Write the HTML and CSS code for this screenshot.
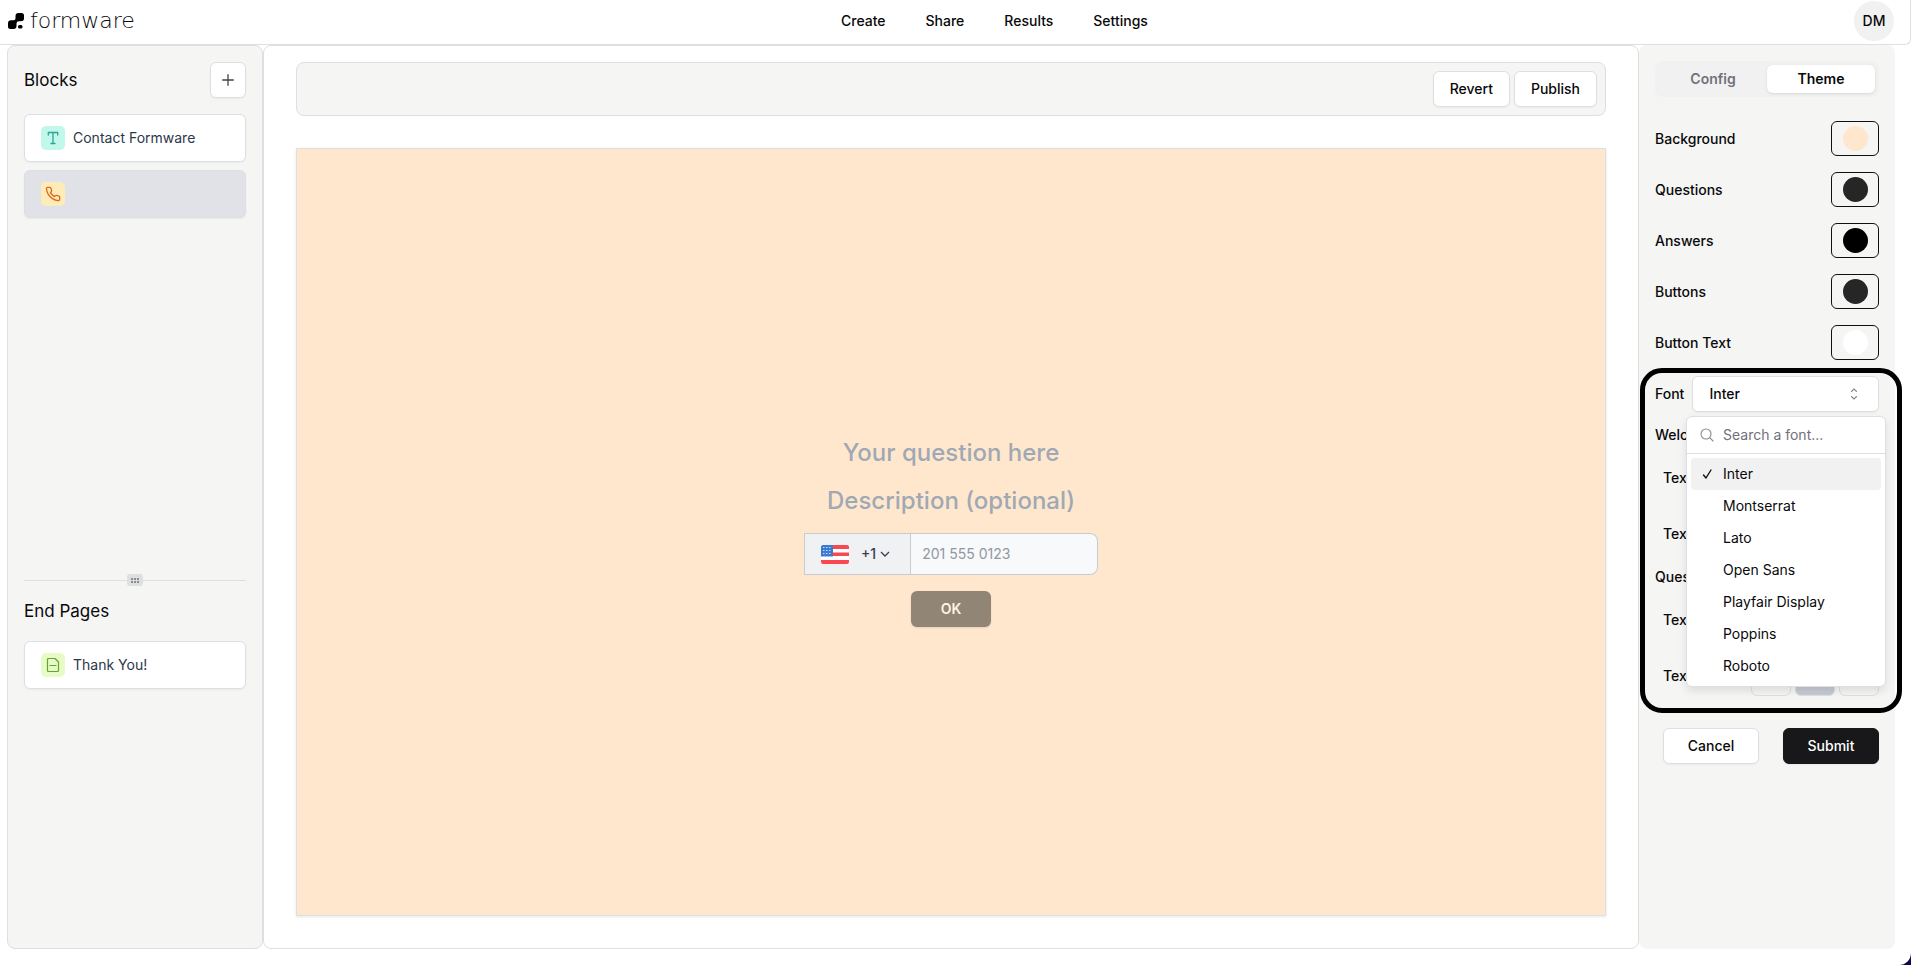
FILE: index.html
```html
<!DOCTYPE html>
<html lang="en">
<head>
<meta charset="utf-8">
<meta name="viewport" content="width=device-width, initial-scale=1">
<title>Formware</title>
<link rel="stylesheet" href="styles.css">
</head>
<body>
<div class="app">
  <header class="header">
    <a class="logo" href="#">
      <svg class="logo-mark" viewBox="0 0 16 16" aria-hidden="true"><path d="M7.500 3Q7.500 0 10.500 0H13.500Q16 0 16 2.500V5.500Q16 8.300 13 8.300H11Q8.500 8.300 8.500 10.500V13Q8.500 16 5.500 16H2.500Q0 16 0 13.500V10.500Q0 7.300 3 7.300H5.500Q7.500 7.300 7.500 5.500Z"/><rect x="10" y="12" width="4.500" height="3.500" rx="1.500"/></svg>
      <span class="logo-name">formware</span>
    </a>
    <nav class="nav">
      <a href="#">Create</a><a href="#">Share</a><a href="#">Results</a><a href="#">Settings</a>
    </nav>
    <button class="avatar" type="button">DM</button>
  </header>

  <div class="workspace">
    <aside class="blocks">
      <section class="blocks-top">
        <div class="blocks-head">
          <h2>Blocks</h2>
          <button class="btn btn-icon" type="button" aria-label="Add block">
            <svg width="16" height="16" viewBox="0 0 16 16" fill="none" stroke="#444" stroke-width="1.300" stroke-linecap="round"><path d="M8 2.700v10.600M2.700 8h10.600"/></svg>
          </button>
        </div>
        <button class="card" type="button">
          <span class="tile teal"><svg width="16" height="16" viewBox="0 0 16 16" fill="none" stroke="#2fa396" stroke-width="1.300" stroke-linecap="round" stroke-linejoin="round"><path d="M3.300 5V2.500h9.400V5M8 2.500v11M6 13.500h4"/></svg></span>
          <span>Contact Formware</span>
        </button>
        <button class="card selected" type="button" aria-label="Phone number block">
          <span class="tile amber"><svg width="16" height="16" viewBox="0 0 24 24" fill="none" stroke="#e0671d" stroke-width="2" stroke-linecap="round" stroke-linejoin="round"><path d="M22 16.920v3a2 2 0 0 1-2.180 2 19.790 19.790 0 0 1-8.630-3.070 19.500 19.500 0 0 1-6-6 19.790 19.790 0 0 1-3.070-8.670A2 2 0 0 1 4.110 2h3a2 2 0 0 1 2 1.720 12.840 12.840 0 0 0 .7 2.810 2 2 0 0 1-.45 2.110L8.090 9.910a16 16 0 0 0 6 6l1.270-1.270a2 2 0 0 1 2.110-.45 12.840 12.840 0 0 0 2.810.7A2 2 0 0 1 22 16.920z"/></svg></span>
        </button>
      </section>
      <div class="divider" role="separator"><span class="grip"><svg width="8" height="5" viewBox="0 0 8 5" fill="#222"><circle cx="1" cy="1" r=".8"/><circle cx="4" cy="1" r=".8"/><circle cx="7" cy="1" r=".8"/><circle cx="1" cy="4" r=".8"/><circle cx="4" cy="4" r=".8"/><circle cx="7" cy="4" r=".8"/></svg></span></div>
      <section class="blocks-end">
        <h2>End Pages</h2>
        <button class="card" type="button">
          <span class="tile lime"><svg width="14" height="16" viewBox="0 0 14 16" fill="none" stroke="#62a52f" stroke-width="1.200" stroke-linejoin="round"><path d="M2.500 1.500H9L12.500 5v8.500a1 1 0 0 1-1 1h-9a1 1 0 0 1-1-1v-11a1 1 0 0 1 1-1Z"/><path d="M4 8.500h6" stroke-linecap="round"/></svg></span>
          <span>Thank You!</span>
        </button>
      </section>
    </aside>

    <main class="editor">
      <div class="toolbar">
        <button class="btn" type="button">Revert</button>
        <button class="btn" type="button">Publish</button>
      </div>
      <form class="stage">
        <p class="prompt">Your question here</p>
        <p class="prompt">Description (optional)</p>
        <div class="phone">
          <button class="country" type="button">
            <svg class="flag" viewBox="0 0 28 19" aria-hidden="true"><rect width="28" height="19" rx="2" fill="#fff"/><path d="M12 0h14a2 2 0 0 1 2 2v2H12ZM12 7.500h16V11H12ZM0 15h28v2a2 2 0 0 1-2 2H2a2 2 0 0 1-2-2Z" fill="#f9484f"/><path d="M2 0h10v11.500H0V2A2 2 0 0 1 2 0Z" fill="#3d7bd0"/><path d="M2 2.500h9M2 5.500h9M2 8.500h9" stroke="#c3d8f3" stroke-width="1.200" stroke-dasharray="1.500 1.500"/></svg>
            <span class="dial">+1<svg width="10" height="10" viewBox="0 0 10 10" fill="none" stroke="#374151" stroke-width="1.300"><path d="M1 3l4 4 4-4"/></svg></span>
          </button>
          <input type="tel" placeholder="201 555 0123" aria-label="Phone number">
        </div>
        <button class="ok" type="button">OK</button>
      </form>
    </main>

    <aside class="theme">
      <div class="tabs" role="tablist">
        <button role="tab" type="button">Config</button>
        <button role="tab" type="button" class="active" aria-selected="true">Theme</button>
      </div>
      <div class="row"><label for="c1">Background</label><button id="c1" class="swatch" type="button"><span class="dot peach"></span></button></div>
      <div class="row"><label for="c2">Questions</label><button id="c2" class="swatch" type="button"><span class="dot dark"></span></button></div>
      <div class="row"><label for="c3">Answers</label><button id="c3" class="swatch" type="button"><span class="dot black"></span></button></div>
      <div class="row"><label for="c4">Buttons</label><button id="c4" class="swatch" type="button"><span class="dot dark"></span></button></div>
      <div class="row"><label for="c5">Button Text</label><button id="c5" class="swatch" type="button"><span class="dot white"></span></button></div>
      <div class="font-area">
        <div class="row font-row">
          <label for="font">Font</label>
          <button id="font" class="btn combo" type="button" role="combobox" aria-expanded="true" aria-controls="fonts">Inter
            <svg width="16" height="16" viewBox="0 0 16 16" fill="none" stroke="#888" stroke-width="1.100" stroke-linecap="round" stroke-linejoin="round"><path d="M5.500 5.500 8 3l2.500 2.500M5.500 10.500 8 13l2.500-2.500"/></svg>
          </button>
          <div class="popover">
            <div class="search">
              <svg width="16" height="16" viewBox="0 0 16 16" fill="none" stroke="#8a8a8a" stroke-width="1.100" stroke-linecap="round"><circle cx="7" cy="7" r="5"/><path d="m10.700 10.700 3.300 3.300"/></svg>
              <input type="text" placeholder="Search a font..." aria-label="Search a font">
            </div>
            <ul id="fonts" class="options" role="listbox">
              <li role="option" aria-selected="true" class="current"><svg width="16" height="16" viewBox="0 0 16 16" fill="none" stroke="#111" stroke-width="1.400" stroke-linecap="round" stroke-linejoin="round"><path d="m4.500 9 2.500 3 5-8"/></svg>Inter</li>
              <li role="option">Montserrat</li>
              <li role="option">Lato</li>
              <li role="option">Open Sans</li>
              <li role="option">Playfair Display</li>
              <li role="option">Poppins</li>
              <li role="option">Roboto</li>
            </ul>
          </div>
        </div>
        <h3>Welcome</h3>
        <div class="row sub"><span>Text</span></div>
        <div class="row sub"><span>Text</span></div>
        <h3>Question</h3>
        <div class="row sub"><span>Text</span></div>
        <div class="row sub"><span>Text</span>
          <div class="toggles"><button type="button" aria-label="Small"></button><button type="button" class="on" aria-label="Medium"></button><button type="button" aria-label="Large"></button></div>
        </div>
        <div class="highlight"></div>
      </div>
      <div class="actions">
        <button class="btn" type="button">Cancel</button>
        <button class="btn primary" type="button">Submit</button>
      </div>
    </aside>
  </div>
</div>
</body>
</html>
```
FILE: styles.css
```css
* { box-sizing: border-box; margin: 0; }
html { background: #15044a; }
body { font: 14px/20px Inter, "Liberation Sans", sans-serif; color: #09090b; }
button, input { font: inherit; color: inherit; }
button { cursor: pointer; padding: 0; }
a { color: inherit; text-decoration: none; }
h2 { font-size: 17px; line-height: 28px; font-weight: 400; }
h3 { font-size: 14px; line-height: 14px; font-weight: 500; }

.app { min-height: 100vh; display: flex; flex-direction: column; background: #fff; border-radius: 0 0 12px 0; }

.header { height: 45px; display: flex; align-items: center; justify-content: space-between; padding: 0 16px 2px 8px; border: solid #dedfe1; border-width: 0 1px 1px 0; border-radius: 0 0 6px 0; }
.logo { display: flex; align-items: center; gap: 6px; }
.logo-mark { width: 16px; height: 16px; }
.logo-name { font: 200 22px/24px "DejaVu Sans", sans-serif; }
.nav { display: flex; gap: 40px; font-weight: 500; }
.avatar { width: 40px; height: 40px; border: 0; border-radius: 50%; background: #f1f1f1; font-weight: 500; }

.workspace { flex: 1; display: flex; padding: 0 16px 16px 7px; }

.blocks { width: 256px; display: flex; flex-direction: column; padding: 16px; background: #f5f5f4; border: 1px solid #dedfe1; border-radius: 8px; }
.blocks-top { flex: 17 1 0; display: flex; flex-direction: column; gap: 8px; }
.blocks-head { display: flex; align-items: center; justify-content: space-between; margin-bottom: 8px; }
.blocks-end { flex: 11 1 0; display: flex; flex-direction: column; gap: 16px; padding-top: 16px; }
.card { height: 48px; display: flex; align-items: center; gap: 8px; padding: 0 16px; border: 1px solid #dedfe5; border-radius: 6px; background: #fff; color: #2d3748; box-shadow: 0 1px 2px #0000000d; }
.card.selected { background: #e1e2e8; }
.tile { width: 24px; height: 24px; display: grid; place-items: center; border-radius: 5px; }
.teal { background: #c2f8ec; }
.amber { background: #fdecb8; }
.lime { background: #e6fbc5; }
.divider { height: 1px; background: #dedfe1; display: flex; align-items: center; justify-content: center; }
.grip { flex: none; width: 16px; height: 12px; display: grid; place-items: center; border-radius: 3px; background: #dedfe1; }

.btn { height: 36px; padding: 0 16px; border: 1px solid #dedfe5; border-radius: 6px; background: #fff; font-weight: 500; box-shadow: 0 1px 2px #0000000d; }
.btn-icon { width: 36px; padding: 0; display: grid; place-items: center; }
.primary { background: #18181b; border-color: #18181b; color: #fff; }

.editor { flex: 1; display: flex; flex-direction: column; gap: 32px; padding: 16px 32px 32px; border: 1px solid #dedfe1; border-radius: 8px; }
.toolbar { display: flex; justify-content: flex-end; gap: 4px; padding: 8px; background: #f5f5f4; border: 1px solid #dedfe1; border-radius: 8px; }
.stage { flex: 1; display: flex; flex-direction: column; align-items: center; justify-content: center; gap: 16px; background: #ffe7ce; border: 1px solid #dedfe1; box-shadow: 0 1px 3px #0000001a; }
.prompt { font-size: 24px; line-height: 32px; font-weight: 500; color: #a0a9b3; }
.phone { display: flex; height: 42px; width: 294px; }
.country { display: flex; align-items: center; gap: 12px; padding: 0 20px 0 16px; border: 1px solid #c8ccd2; background: #f0f1f3; color: #374151; font-weight: 500; }
.flag { width: 28px; height: 19px; }
.dial { display: flex; align-items: center; gap: 4px; }
.phone input { flex: 1; min-width: 0; padding: 0 11px; border: 1px solid #c8ccd2; border-left: 0; border-radius: 0 8px 8px 0; background: #f8f9fb; }
.phone input::placeholder { color: #9197a3; }
.ok { width: 80px; height: 36px; border: 0; border-radius: 6px; background: #918576; color: #fff3e4; font-weight: 600; box-shadow: 0 1px 2px #0000001a; }

.theme { width: 256px; display: flex; flex-direction: column; gap: 16px; padding: 16px; background: #f5f5f4; border-radius: 8px; }
.tabs { display: flex; height: 36px; padding: 4px; margin-bottom: 8px; border-radius: 8px; background: #f1f1f2; }
.tabs button { flex: 1; border: 0; border-radius: 6px; background: none; color: #71717a; font-weight: 600; }
.tabs .active { background: #fff; color: #09090b; box-shadow: 0 1px 3px #0000001a; }
.row { display: flex; align-items: center; justify-content: space-between; font-weight: 500; }
.swatch { width: 48px; height: 35px; display: grid; place-items: center; border: 1px solid #111; border-radius: 6px; background: none; }
.dot { width: 25px; height: 25px; border-radius: 50%; }
.peach { background: #ffe7ce; }
.dark { background: #262626; }
.black { background: #000; }
.white { background: #fff; }

.font-area { position: relative; display: flex; flex-direction: column; gap: 16px; }
.font-row { position: relative; gap: 8px; }
.combo { flex: 1; display: flex; align-items: center; justify-content: space-between; }
.sub { height: 40px; padding-left: 8px; }
.toggles { display: flex; gap: 4px; }
.toggles button { width: 40px; height: 40px; border: 1px solid #dedfe5; border-radius: 6px; background: none; }
.toggles .on { background: #c6cad2; }
.popover { position: absolute; top: 40px; left: 31px; right: -7px; z-index: 1; border: 1px solid #dedfe5; border-radius: 6px; background: #fff; font-weight: 400; box-shadow: 0 4px 8px #0000001a; }
.search { display: flex; align-items: center; gap: 8px; height: 37px; padding: 0 12px; border-bottom: 1px solid #dedfe5; }
.search input { flex: 1; min-width: 0; border: 0; padding: 0; outline: 0; background: none; }
.search input::placeholder { color: #71717a; }
.options { list-style: none; padding: 4px; }
.options li { display: flex; align-items: center; gap: 8px; height: 32px; padding-left: 32px; border-radius: 4px; }
.options .current { padding-left: 8px; background: #f1f1f2; }
.highlight { position: absolute; inset: -8px -23px -17px -15px; border: 5px solid #000; border-radius: 22px; z-index: 2; pointer-events: none; }
.actions { display: flex; justify-content: space-between; padding: 16px 0 0 8px; }
.actions .btn { width: 96px; }
```
